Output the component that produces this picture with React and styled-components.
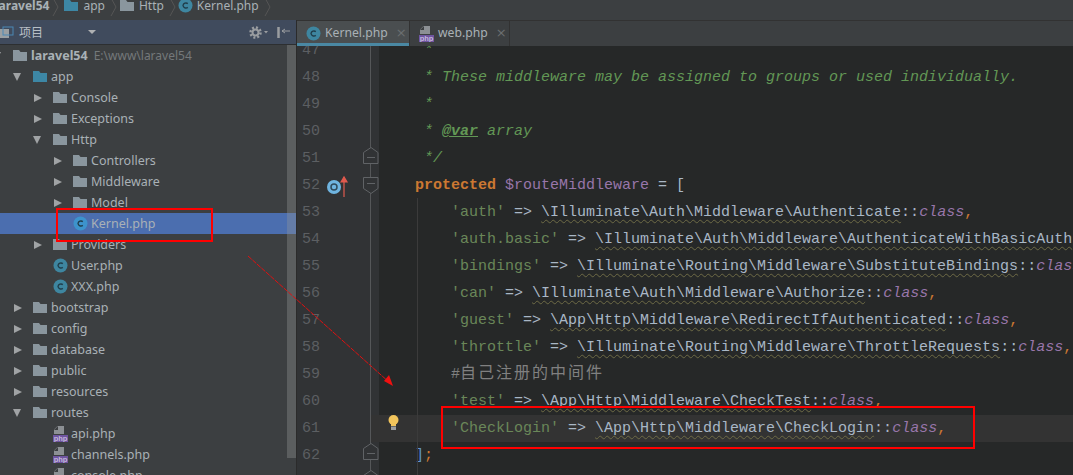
import React from 'react';
import styled, { createGlobalStyle } from 'styled-components';

const Global = createGlobalStyle`
  html, body { margin: 0; padding: 0; background: #3c3f41; overflow: hidden; }
  #root { width: 1073px; height: 475px; }
`;
const Page = styled.div`
  position: relative; width: 1073px; height: 475px; overflow: hidden;
  display: flex; flex-direction: column; background: #3c3f41;
  font-family: "Noto Sans", "Noto Sans CJK SC", sans-serif;
`;
const Breadcrumbs = styled.div`
  height: 20px; flex: none; display: flex; align-items: center; background: #3c3f41;
  font-size: 12px; color: #a9b1b6; overflow: hidden;
`;
const Crumb = styled.span`
  display: inline-flex; align-items: center; gap: ${p => p.$gap ?? 5}px; margin-left: ${p => p.$ml || 0}px;
  font-weight: ${p => p.$bold ? 700 : 400}; white-space: nowrap; margin-top: -9px;
`;
const Chevron = styled.svg`width: 7px; height: 20px; flex: none; margin-left: ${p => p.$ml}px; margin-top: -6px;`;
const Main = styled.div`flex: 1; display: flex; min-height: 0;`;
const Sidebar = styled.aside`
  width: 296px; flex: none; display: flex; flex-direction: column; position: relative; overflow: hidden;
  border-right: 1px solid #2b2b2b;
`;
const PanelHeader = styled.div`
  height: 25px; box-sizing: border-box; flex: none; display: flex; align-items: center; padding-right: 6px;
  background: #404b5d; border-bottom: 1px solid #2d2f31; color: #b8bfc6;
`;
const PanelTitle = styled.span`margin-left: 5px; font-size: 12px;`;
const Caret = styled.span`
  width: 0; height: 0; border-left: 4px solid transparent; border-right: 4px solid transparent;
  border-top: 4px solid #afb1b3; margin-left: 45px;
`;
const HeaderTools = styled.div`margin-left: auto; display: flex; align-items: center; gap: 9px;`;
const Tree = styled.div`display: flex; flex-direction: column;`;
const Row = styled.div`
  height: 21px; box-sizing: border-box; flex: none; display: flex; align-items: center; font-size: 12.5px;
  color: #a9b1b6; white-space: nowrap;
  padding-left: ${p => Math.max(p.$depth * 20 - 7, 0)}px;
  margin-left: ${p => Math.min(p.$depth * 20 - 7, 0)}px;
  background: ${p => p.$selected ? '#4b6eaf' : 'transparent'};
`;
const Arrow = styled.span`
  width: 20px; flex: none; height: 10px; display: flex; align-items: center; justify-content: flex-start;
  &::before {
    content: ""; width: 0; height: 0; display: ${p => p.$dir ? 'block' : 'none'};
    ${p => p.$dir === 'right'
      ? 'border-top: 4.5px solid transparent; border-bottom: 4.5px solid transparent; border-left: 8px solid #a0a3a5; margin-left: 1px;'
      : 'border-left: 4.5px solid transparent; border-right: 4.5px solid transparent; border-top: 8px solid #a0a3a5;'}
  }
`;
const IconSlot = styled.span`width: 18px; flex: none; display: flex; align-items: center;`;
const RowLabel = styled.span`font-weight: ${p => p.$bold ? 700 : 400};`;
const RowPath = styled.span`margin-left: 6px; color: #74787a; font-size: 12px;`;
const Scrollbar = styled.div`
  position: absolute; left: 287px; top: 25px; width: 9px; height: 413px;
  background: rgba(148, 151, 153, 0.35);
`;
const Editor = styled.section`flex: 1; min-width: 0; display: flex; flex-direction: column;`;
const TabBar = styled.div`
  height: 26px; box-sizing: border-box; flex: none; display: flex; background: #3c3f41; border-top: 1px solid #323232;
`;
const Tab = styled.div`
  display: flex; align-items: center; gap: 4px; font-size: 12.2px; color: #a9b1b6; padding-left: ${p => p.$pl}px;
  width: ${p => p.$w}px; box-sizing: border-box; border-right: 1px solid #323232;
  background: ${p => p.$active ? '#4a4e50' : 'transparent'};
  box-shadow: ${p => p.$active ? 'inset 0 -3px 0 #4a88a3' : 'none'};
`;
const TabLabel = styled.span`margin-top: -2px;`;
const TabClose = styled.span`color: #6b6e70; font-size: 13px; margin-left: 4px; margin-top: -2px; font-family: "DejaVu Sans", sans-serif;`;
const Body = styled.div`flex: 1; display: flex; overflow: hidden; min-height: 0;`;
const Gutter = styled.div`
  width: 82px; flex: none; background: #313335; display: flex; flex-direction: column;
  margin-top: -9px; position: relative;
`;
const GutterRow = styled.div`
  height: 27px; flex: none; display: flex; align-items: center; position: relative;
  background: ${p => p.$current ? 'linear-gradient(90deg, #313335 0, #313335 74px, #333333 74px)' : 'transparent'};
`;
const LineNo = styled.span`
  width: 30px; box-sizing: border-box; padding-left: 5px; font: 15px "Liberation Mono", monospace; color: #5c5f62; flex: none;
`;
const GutterMark = styled.span`display: flex; align-items: center; width: 28px; flex: none;`;
const FoldLine = styled.div`
  position: absolute; left: 73px; top: 0; bottom: 0; width: 1px; background: #555759;
`;
const Fold = styled.svg`position: absolute; left: 66px; top: ${p => p.$top}px; width: 16px; height: 17px;`;
const Code = styled.div`
  flex: 1; min-width: 0; background: #262828; display: flex; flex-direction: column; margin-top: -9px;
  font: 15px "Liberation Mono", "Noto Sans CJK SC", monospace; color: #a9b7c6; overflow: hidden; position: relative;
`;
const Guide = styled.div`position: absolute; left: 38px; top: 161px; bottom: 0; width: 1px; background: #3b3b3b;`;
const Line = styled.div`
  height: 27px; flex: none; line-height: 27px; white-space: pre; overflow: visible;
  background: ${p => p.$current ? '#333333' : 'transparent'};
`;
const Doc = styled.span`color: #629755; font-style: italic;`;
const DocTag = styled.span`color: #629755; font-style: italic; font-weight: 700; text-decoration: underline;`;
const Str = styled.span`color: #6a8759;`;
const Kw = styled.span`color: #cc7832; font-weight: ${p => p.$bold ? 700 : 400};`;
const Bracket = styled.span`color: #5f94cc;`;
const Var = styled.span`color: #9876aa;`;
const Const = styled.span`color: #9876aa; font-style: italic;`;
const Path = styled.span`text-decoration: underline wavy #6d6a45 1px; text-underline-offset: 3px;`;
const Hash = styled.span`color: #808080;`;
const Cjk = styled.span`font-family: "Noto Sans CJK SC", sans-serif; font-size: 16px; letter-spacing: 2px; line-height: 1;`;
const RedBox = styled.div`
  position: absolute; left: ${p => p.$l}px; top: ${p => p.$t}px; width: ${p => p.$w}px; height: ${p => p.$h}px;
  box-sizing: border-box; border: 2px solid #f00; pointer-events: none;
`;
const Annotation = styled.svg`position: absolute; left: 0; top: 0; width: 1073px; height: 475px; pointer-events: none;`;
const BulbBox = styled.svg`position: absolute; left: 388px; top: 415px; width: 11px; height: 15px;`;

const Folder = ({ color = '#8a969e', w = 14, h = 11 }) => (
  <svg width={w} height={h} viewBox="0 0 14 11"><path d="M0 0h6l1.5 2H14v9H0z" fill={color} /></svg>
);
const ClassIcon = ({ size = 15, fill = '#3e86a0' }) => (
  <svg width={size} height={size} viewBox="0 0 15 15">
    <circle cx="7.5" cy="7.5" r="7" fill={fill} />
    <path d="M9.8 5.6A3 3 0 0 0 5 7.5a3 3 0 0 0 4.8 1.9" fill="none" stroke="#1f3d4a" strokeWidth="1.4" />
  </svg>
);
const PhpIcon = () => (
  <svg width="15" height="16" viewBox="0 0 15 16">
    <path d="M4.500 0H11v8H1V3.500z" fill="#8c9094" />
    <path d="M5 0v4H1z" fill="#3c3f41" />
    <rect y="9" width="15" height="7" fill="#6f55a0" />
    <text x="7.500" y="15" textAnchor="middle" fontSize="7.500" fontWeight="700" fontFamily="Liberation Sans, sans-serif" fill="#c4b8dc">php</text>
  </svg>
);

const tree = [
  { d: 0, a: 'down', i: 'folder', t: 'laravel54', b: true, p: 'E:\\www\\laravel54' },
  { d: 1, a: 'down', i: 'src', t: 'app' },
  { d: 2, a: 'right', i: 'folder', t: 'Console' },
  { d: 2, a: 'right', i: 'folder', t: 'Exceptions' },
  { d: 2, a: 'down', i: 'folder', t: 'Http' },
  { d: 3, a: 'right', i: 'folder', t: 'Controllers' },
  { d: 3, a: 'right', i: 'folder', t: 'Middleware' },
  { d: 3, a: 'right', i: 'folder', t: 'Model' },
  { d: 3, i: 'class', t: 'Kernel.php', s: true },
  { d: 2, a: 'right', i: 'folder', t: 'Providers' },
  { d: 2, i: 'class', t: 'User.php' },
  { d: 2, i: 'class', t: 'XXX.php' },
  { d: 1, a: 'right', i: 'folder', t: 'bootstrap' },
  { d: 1, a: 'right', i: 'folder', t: 'config' },
  { d: 1, a: 'right', i: 'folder', t: 'database' },
  { d: 1, a: 'right', i: 'folder', t: 'public' },
  { d: 1, a: 'right', i: 'folder', t: 'resources' },
  { d: 1, a: 'down', i: 'folder', t: 'routes' },
  { d: 2, i: 'php', t: 'api.php' },
  { d: 2, i: 'php', t: 'channels.php' },
  { d: 2, i: 'php', t: 'console.php' },
];
const rowIcon = (r) => r.i === 'class'
  ? <ClassIcon fill={r.s ? '#3d93cc' : '#3e86a0'} />
  : r.i === 'php' ? <PhpIcon /> : r.i === 'src' ? <Folder color="#3d87a5" /> : <Folder />;

const entry = (key, path) => (
  <>{'        '}<Str>{`'${key}'`}</Str>{' => '}<Path>{path}</Path>{'::'}<Const>class</Const><Kw>,</Kw></>
);
const lines = [
  [47, <Doc>{'     *'}</Doc>],
  [48, <Doc>{'     * These middleware may be assigned to groups or used individually.'}</Doc>],
  [49, <Doc>{'     *'}</Doc>],
  [50, <><Doc>{'     * '}</Doc><DocTag>@var</DocTag><Doc> array</Doc></>],
  [51, <Doc>{'     */'}</Doc>],
  [52, <>{'    '}<Kw $bold>protected</Kw>{' '}<Var>$routeMiddleware</Var>{' = ['}</>],
  [53, entry('auth', '\\Illuminate\\Auth\\Middleware\\Authenticate')],
  [54, entry('auth.basic', '\\Illuminate\\Auth\\Middleware\\AuthenticateWithBasicAuth')],
  [55, entry('bindings', '\\Illuminate\\Routing\\Middleware\\SubstituteBindings')],
  [56, entry('can', '\\Illuminate\\Auth\\Middleware\\Authorize')],
  [57, entry('guest', '\\App\\Http\\Middleware\\RedirectIfAuthenticated')],
  [58, entry('throttle', '\\Illuminate\\Routing\\Middleware\\ThrottleRequests')],
  [59, <>{'        '}<Hash>#<Cjk>自己注册的中间件</Cjk></Hash></>],
  [60, entry('test', '\\App\\Http\\Middleware\\CheckTest')],
  [61, entry('CheckLogin', '\\App\\Http\\Middleware\\CheckLogin')],
  [62, <>{'    '}<Bracket>]</Bracket><Kw>;</Kw></>],
  [63, <>{'}'}</>],
];

const FoldEnd = ({ top }) => (
  <Fold $top={top} viewBox="0 0 16 17"><path d="M.5 5.500 8 .5l7 5v11H.5zM4 10.500h8" fill="#313335" stroke="#606366" /></Fold>
);
const FoldStart = ({ top }) => (
  <Fold $top={top} viewBox="0 0 16 17"><path d="M.5.500H15v11l-7 5-7.500-5zM4 6.500h8" fill="#313335" stroke="#606366" /></Fold>
);
const CrumbChevron = ({ ml }) => (
  <Chevron $ml={ml} viewBox="0 0 7 20"><path d="M1 1l5 9-5 9" fill="none" stroke="#555" /></Chevron>
);

export default function App() {
  return (
    <Page>
      <Global />
      <Breadcrumbs>
        <Crumb $bold $ml={-5}>laravel54</Crumb>
        <CrumbChevron ml={3} />
        <Crumb $ml={5}><Folder color="#3d87a5" />app</Crumb>
        <CrumbChevron ml={5} />
        <Crumb $ml={3}><Folder />Http</Crumb>
        <CrumbChevron ml={5} />
        <Crumb $ml={2} $gap={4}><ClassIcon />Kernel.php</Crumb>
        <CrumbChevron ml={5} />
      </Breadcrumbs>
      <Main>
        <Sidebar>
          <PanelHeader>
            <svg width="14" height="13" viewBox="0 0 14 13">
              <rect x="0" y="3" width="9" height="9" fill="#9aa0a4" />
              <rect x="3" y="1" width="10" height="8" fill="none" stroke="#4a88b5" />
            </svg>
            <PanelTitle>项目</PanelTitle>
            <Caret />
            <HeaderTools>
              <svg width="19" height="13" viewBox="0 0 19 13">
                <circle cx="6.500" cy="6.500" r="5" fill="none" stroke="#9a9da0" strokeWidth="2.500" strokeDasharray="2 1.900" />
                <circle cx="6.500" cy="6.500" r="3" fill="none" stroke="#9a9da0" strokeWidth="2" />
                <path d="M15 5h4l-2 2.500z" fill="#9a9da0" />
              </svg>
              <svg width="13" height="13" viewBox="0 0 13 13">
                <path d="M1.500 1v11" stroke="#9a9da0" strokeWidth="2.500" />
                <path d="M5 5h8M5 5l3-2M5 5l3 2" fill="none" stroke="#9a9da0" />
              </svg>
            </HeaderTools>
          </PanelHeader>
          <Tree>
            {tree.map((r) => (
              <Row key={r.t} $depth={r.d} $selected={r.s}>
                <Arrow $dir={r.a} />
                <IconSlot>{rowIcon(r)}</IconSlot>
                <RowLabel $bold={r.b}>{r.t}</RowLabel>
                {r.p && <RowPath>{r.p}</RowPath>}
              </Row>
            ))}
          </Tree>
          <Scrollbar />
        </Sidebar>
        <Editor>
          <TabBar>
            <Tab $active $w={113} $pl={9}><ClassIcon /><TabLabel>Kernel.php</TabLabel><TabClose>×</TabClose></Tab>
            <Tab $w={100} $pl={9}><PhpIcon /><TabLabel>web.php</TabLabel><TabClose>×</TabClose></Tab>
          </TabBar>
          <Body>
            <Gutter>
              {lines.map(([n]) => (
                <GutterRow key={n} $current={n === 61}>
                  <LineNo>{n}</LineNo>
                  <GutterMark>
                    {n === 52 && (
                      <svg width="24" height="22" viewBox="0 0 24 22">
                        <circle cx="7" cy="12" r="7" fill="#6fb4e0" />
                        <circle cx="7" cy="12" r="3" fill="none" stroke="#2f4a5c" strokeWidth="1.500" />
                        <path d="M17 22V4M14 7l3-5 3 5z" stroke="#e05a4e" fill="#e05a4e" strokeWidth="1.200" />
                      </svg>
                    )}
                  </GutterMark>
                </GutterRow>
              ))}
              <FoldLine />
              <FoldEnd top={110} />
              <FoldStart top={140} />
              <FoldEnd top={406} />
              <FoldEnd top={433} />
            </Gutter>
            <Code>
              <Guide />
              {lines.map(([n, c]) => <Line key={n} $current={n === 61}>{c}</Line>)}
            </Code>
          </Body>
        </Editor>
      </Main>
      <BulbBox viewBox="0 0 11 15">
        <circle cx="5.500" cy="5" r="5" fill="#f2c55c" />
        <rect x="3" y="9" width="5" height="2" fill="#f2c55c" />
        <rect x="3" y="11.500" width="5" height="3.500" fill="#9a9da0" />
      </BulbBox>
      <RedBox $l={56} $t={208} $w={157} $h={34} />
      <RedBox $l={441} $t={406} $w={534} $h={43} />
      <Annotation viewBox="0 0 1073 475">
        <path d="M248 256 390 383" stroke="#e01010" strokeDasharray="5 1" fill="none" />
        <path d="M393 386 384 381 389 375z" fill="#f01010" />
      </Annotation>
    </Page>
  );
}
